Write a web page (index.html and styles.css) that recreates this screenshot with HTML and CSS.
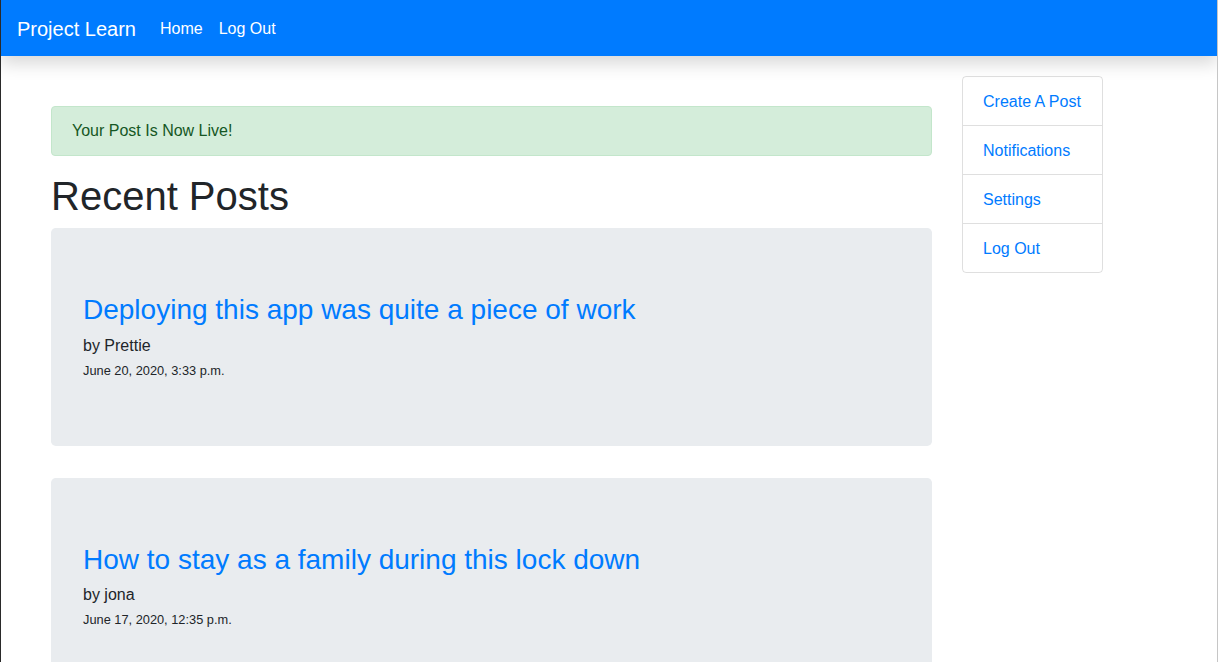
FILE: index.html
```html
<!DOCTYPE html>
<html lang="en">
<head>
<meta charset="utf-8">
<title>Project Learn</title>
<link rel="stylesheet" href="styles.css">
</head>
<body>
<nav class="navbar">
  <a class="brand" href="#">Project Learn</a>
  <ul class="nav">
    <li><a class="nav-link" href="#">Home</a></li>
    <li><a class="nav-link" href="#">Log Out</a></li>
  </ul>
</nav>
<div class="page">
  <main class="main">
    <div class="alert">Your Post Is Now Live!</div>
    <h1 class="heading">Recent Posts</h1>
    <section class="post">
      <h3 class="post-title"><a href="#">Deploying this app was quite a piece of work</a></h3>
      <p class="post-author">by Prettie</p>
      <div class="post-date">June 20, 2020, 3:33 p.m.</div>
    </section>
    <section class="post">
      <h3 class="post-title"><a href="#">How to stay as a family during this lock down</a></h3>
      <p class="post-author">by jona</p>
      <div class="post-date">June 17, 2020, 12:35 p.m.</div>
    </section>
  </main>
  <aside class="sidebar">
    <ul class="list-group">
      <li><a href="#">Create A Post</a></li>
      <li><a href="#">Notifications</a></li>
      <li><a href="#">Settings</a></li>
      <li><a href="#">Log Out</a></li>
    </ul>
  </aside>
</div>
</body>
</html>
```
FILE: styles.css
```css
* { box-sizing: border-box; }
html, body { height: 100%; }
body {
  margin: 0;
  font-family: "Liberation Sans", Arial, sans-serif;
  font-size: 16px;
  line-height: 1.5;
  color: #212529;
  background: #fff;
  border-left: 1px solid #2a2a2a;
  border-right: 1px solid #c6c6c6;
  overflow: hidden;
}
a { text-decoration: none; color: #007bff; }

.navbar {
  display: flex;
  align-items: center;
  height: 56px;
  padding: 8px 16px;
  background: #007bff;
  box-shadow: 0 8px 16px rgba(0, 0, 0, 0.15);
  position: relative;
  z-index: 2;
}
.brand {
  color: #fff;
  font-size: 20px;
  line-height: 30px;
  padding: 6px 0 4px;
  margin-right: 16px;
}
.nav {
  display: flex;
  list-style: none;
  margin: 0;
  padding: 0;
}
.nav-link {
  display: block;
  color: #fff;
  padding: 9px 8px 7px;
}

.page {
  display: flex;
  align-items: flex-start;
  padding: 20px 0 0 50px;
  gap: 30px;
}
.main {
  flex: 0 0 881px;
  padding-top: 30px;
}
.alert {
  background: #d4edda;
  border: 1px solid #c3e6cb;
  color: #155724;
  border-radius: 4px;
  padding: 12px 20px;
  margin-bottom: 16px;
}
.heading {
  font-size: 40px;
  font-weight: 500;
  line-height: 1.2;
  margin: 0 0 8px;
}
.post {
  background: #e9ecef;
  border-radius: 4.8px;
  padding: 64px 32px;
  margin-bottom: 32px;
}
.post-title {
  font-size: 28px;
  font-weight: 500;
  line-height: 1.2;
  margin: 0 0 7px;
  padding-top: 1px;
}
.post-author {
  margin: 0;
}
.post-date {
  font-size: 12.8px;
  line-height: 23px;
  padding-top: 1px;
}

.sidebar { flex: 0 0 auto; }
.list-group {
  list-style: none;
  margin: 0;
  padding: 0;
  border: 1px solid rgba(0, 0, 0, 0.125);
  border-radius: 4px;
}
.list-group li {
  border-top: 1px solid rgba(0, 0, 0, 0.125);
}
.list-group li:first-child { border-top: 0; }
.list-group a {
  display: block;
  padding: 13px 21px 11px 20px;
}
```
